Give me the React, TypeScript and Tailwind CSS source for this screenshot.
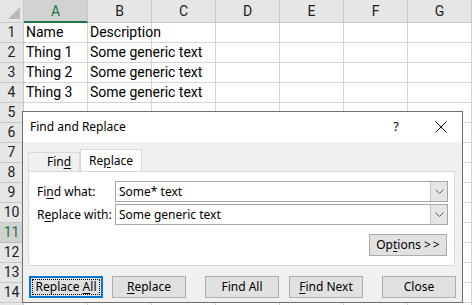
import React from "react";

const cols = ["A", "B", "C", "D", "E", "F", "G"];

const cells: Record<string, string> = {
  "1A": "Name",
  "1B": "Description",
  "2A": "Thing 1",
  "2B": "Some generic text",
  "3A": "Thing 2",
  "3B": "Some generic text",
  "4A": "Thing 3",
  "4B": "Some generic text",
};

const sheetFont = { fontFamily: "Roboto, 'Liberation Sans', sans-serif" };
const uiFont = { fontFamily: "'Segoe UI', 'Noto Sans', sans-serif" };

function U({ children }: { children: React.ReactNode }) {
  return <span className="underline underline-offset-2">{children}</span>;
}

function Sheet() {
  const rows = Array.from({ length: 15 }, (_, i) => i + 1);
  return (
    <div className="flex flex-col bg-white text-[14px] text-black" style={sheetFont}>
      <div className="flex h-[23px]">
        <div className="relative w-[24px] shrink-0 border-b border-r border-[#c8c8c8] bg-[#e6e6e6]">
          <div className="absolute bottom-[3px] right-[3px] h-0 w-0 border-b-[12px] border-l-[12px] border-b-[#b9b9b9] border-l-transparent" />
        </div>
        {cols.map((c) => (
          <div
            key={c}
            className={
              c === "A"
                ? "flex w-[64px] shrink-0 items-center justify-center border-b-2 border-r border-b-[#217346] border-r-[#c8c8c8] bg-[#d2d2d2] pt-[1px] text-[#217346]"
                : "flex w-[64px] shrink-0 items-center justify-center border-b border-r border-[#c8c8c8] bg-[#e6e6e6] text-[#222]"
            }
          >
            {c}
          </div>
        ))}
      </div>
      {rows.map((r) => (
        <div key={r} className="flex h-[20px]">
          <div
            className={
              r === 11
                ? "flex w-[24px] shrink-0 items-center justify-center border-b border-r border-[#bdbdbd] bg-[#d2d2d2] text-[#217346]"
                : "flex w-[24px] shrink-0 items-center justify-center border-b border-r border-[#c8c8c8] bg-[#e6e6e6] text-[#222]"
            }
          >
            {r < 15 ? r : ""}
          </div>
          {cols.map((c) => (
            <div
              key={c}
              className="w-[64px] shrink-0 overflow-visible whitespace-nowrap border-b border-r border-[#d4d4d4] pl-[2px] leading-[19px]"
            >
              {cells[`${r}${c}`] ?? ""}
            </div>
          ))}
        </div>
      ))}
    </div>
  );
}

function Combo({ value }: { value: string }) {
  return (
    <div className="flex h-[21px] w-[333px] border border-[#a6a6a6] bg-white">
      <div className="flex-1 pl-[3px] leading-[19px]">{value}</div>
      <div className="flex w-[17px] items-center justify-center border-l border-[#c4c4c4] bg-[#e5e5e5]">
        <svg width="9" height="5" viewBox="0 0 9 5">
          <path d="M0.5 0.5 L4.5 4.5 L8.5 0.5" fill="none" stroke="#606060" strokeWidth="1" />
        </svg>
      </div>
    </div>
  );
}

function Btn({
  children,
  focused,
  className = "",
}: {
  children: React.ReactNode;
  focused?: boolean;
  className?: string;
}) {
  if (focused) {
    return (
      <div className={`flex h-[22px] w-[74px] border-2 border-[#0078d7] bg-[#e1e1e1] p-[1px] ${className}`}>
        <div className="flex flex-1 items-center justify-center border border-dotted border-black">
          <span>{children}</span>
        </div>
      </div>
    );
  }
  return (
    <div
      className={`flex h-[22px] w-[74px] items-center justify-center border border-[#adadad] bg-[#e1e1e1] ${className}`}
    >
      <span>{children}</span>
    </div>
  );
}

function Dialog() {
  return (
    <div
      className="absolute left-[22px] top-[111px] flex h-[192px] w-[441px] flex-col border border-[#6f6f6f] bg-[#f0f0f0] text-[12px] text-black"
      style={uiFont}
    >
      <div className="flex h-[30px] items-center bg-white pl-[7px]">
        <div className="flex-1">Find and Replace</div>
        <div className="mr-[36px] text-[13px]">?</div>
        <svg width="12" height="12" viewBox="0 0 12 12" className="mr-[15px]">
          <path d="M0.5 0.5 L11.5 11.5 M11.5 0.5 L0.5 11.5" stroke="#111" strokeWidth="1" />
        </svg>
      </div>

      <div className="flex flex-col pl-[5px] pr-[7px] pt-[7px]">
        <div className="flex items-end">
          <div className="flex h-[19px] w-[52px] items-center justify-center border border-b-0 border-[#d9d9d9] pl-[10px]">
            <span>
              Fin<U>d</U>
            </span>
          </div>
          <div className="-mb-[1px] flex h-[23px] w-[62px] items-center justify-center border border-b-0 border-[#d9d9d9] bg-white pb-[1px]">
            <span>
              Re<U>p</U>lace
            </span>
          </div>
        </div>
        <div className="flex h-[95px] flex-col border border-[#d9d9d9] bg-white pl-[8px] pt-[9px]">
          <div className="flex items-center">
            <div className="w-[78px]">
              Fi<U>n</U>d what:
            </div>
            <Combo value="Some* text" />
          </div>
          <div className="mt-[2px] flex items-center">
            <div className="w-[78px]">
              R<U>e</U>place with:
            </div>
            <Combo value="Some generic text" />
          </div>
          <div className="mt-[9px] flex justify-end pr-[7px]">
            <Btn className="w-[78px]">
              Op<U>t</U>ions &gt;&#8201;&gt;
            </Btn>
          </div>
        </div>
      </div>

      <div className="mt-[10px] flex pl-[6px]">
        <Btn focused>
          Replace <U>A</U>ll
        </Btn>
        <Btn className="ml-[9px]">
          <U>R</U>eplace
        </Btn>
        <Btn className="ml-[19px]">Find All</Btn>
        <Btn className="ml-[10px]">
          <U>F</U>ind Next
        </Btn>
        <Btn className="ml-[19px]">Close</Btn>
      </div>
    </div>
  );
}

export default function App() {
  return (
    <div className="relative h-[305px] w-[472px] overflow-hidden bg-white">
      <Sheet />
      <Dialog />
    </div>
  );
}
